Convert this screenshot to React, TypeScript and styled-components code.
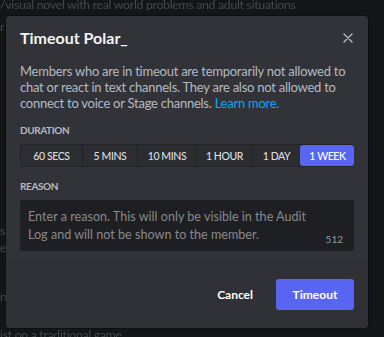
import React from "react";
import styled, { createGlobalStyle } from "styled-components";

const Global = createGlobalStyle`
  html, body { margin: 0; padding: 0; background: #111214; }
  body { font-family: Lato, "Noto Sans", sans-serif; }
  * { box-sizing: border-box; }
`;

const Page = styled.div`
  position: relative;
  width: 384px;
  height: 337px;
  overflow: hidden;
  background: #141517;
`;

const Backdrop = styled.div`
  display: flex;
  flex-direction: column;
  height: 100%;
  color: #46484c;
  font-size: 12.3px;
  letter-spacing: -0.3px;
  line-height: 16px;
  filter: blur(0.4px);
`;

const BackLine = styled.div<{ $top: number }>`
  margin-top: ${(p) => p.$top}px;
  white-space: nowrap;
  height: 16px;
`;

const Modal = styled.div`
  position: absolute;
  left: 6px;
  top: 16px;
  width: 362px;
  height: 312px;
  border-radius: 4px;
  background: #313338;
  display: flex;
  flex-direction: column;
  overflow: hidden;
  box-shadow: 0 0 0 1px rgba(0, 0, 0, 0.25);
`;

const Body = styled.div`
  padding: 12px 14px 0 14px;
  display: flex;
  flex-direction: column;
`;

const Header = styled.div`
  display: flex;
  align-items: center;
  justify-content: space-between;
  height: 20px;
`;

const Title = styled.h1`
  margin: 0;
  font-size: 16px;
  line-height: 20px;
  font-weight: 700;
  color: #f2f3f5;
`;

const Close = styled.button`
  border: none;
  background: none;
  padding: 0;
  width: 12px;
  height: 12px;
  display: flex;
  align-items: center;
  justify-content: center;
  color: #b5bac1;
`;

const Description = styled.p`
  margin: 15px 0 0 0;
  font-size: 13px;
  letter-spacing: -0.25px;
  line-height: 16px;
  color: #b5bac1;
`;

const Link = styled.a`
  color: #00a8fc;
  text-decoration: none;
`;

const Label = styled.div<{ $gap: number }>`
  margin-top: ${(p) => p.$gap}px;
  font-size: 10px;
  letter-spacing: -0.4px;
  line-height: 13px;
  font-weight: 700;
  color: #b5bac1;
  text-transform: uppercase;
`;

const Segments = styled.div`
  margin-top: 7px;
  display: flex;
  height: 23px;
  background: #2b2d31;
  border-radius: 3px;
  border: 1px solid #232428;
`;

const Segment = styled.div<{ $active?: boolean; $w: number }>`
  width: ${(p) => p.$w}px;
  flex: none;
  display: flex;
  align-items: center;
  justify-content: center;
  font-size: 10.5px;
  font-weight: 500;
  letter-spacing: -0.4px;
  color: ${(p) => (p.$active ? "#ffffff" : "#dbdee1")};
  background: ${(p) => (p.$active ? "#5865f2" : "transparent")};
  border-left: 1px solid ${(p) => (p.$active ? "transparent" : "#232428")};
  border-radius: ${(p) => (p.$active ? "3px" : "0")};
  &:first-child { border-left: none; }
`;

const TextArea = styled.div`
  margin-top: 7px;
  height: 51px;
  background: #1e1f22;
  border-radius: 3px;
  position: relative;
  padding: 8px 8px 0 8px;
`;

const Placeholder = styled.div`
  font-size: 12.6px;
  line-height: 17.5px;
  color: #87898c;
  white-space: nowrap;
`;

const Counter = styled.span`
  position: absolute;
  right: 11px;
  bottom: 6px;
  font-size: 10px;
  color: #949ba4;
`;

const Footer = styled.div`
  margin-top: auto;
  height: 68px;
  background: #2f3136;
  display: flex;
  align-items: center;
  justify-content: flex-end;
  gap: 13px;
  padding: 0 14px 0 0;
`;

const Button = styled.button<{ $primary?: boolean }>`
  height: 31px;
  padding: 0 ${(p) => (p.$primary ? "14px" : "10px")};
  min-width: ${(p) => (p.$primary ? "78px" : "0")};
  border: none;
  border-radius: 3px;
  font-family: inherit;
  font-size: 12px;
  font-weight: 700;
  color: #ffffff;
  background: ${(p) => (p.$primary ? "#5865f2" : "transparent")};
`;

const durations: { label: string; w: number }[] = [
  { label: "60 SECS", w: 61 },
  { label: "5 MINS", w: 55 },
  { label: "10 MINS", w: 59 },
  { label: "1 HOUR", w: 56 },
  { label: "1 DAY", w: 48 },
  { label: "1 WEEK", w: 54 },
];

export default function App() {
  return (
    <>
      <Global />
      <Page>
        <Backdrop>
          <BackLine $top={-3}>/visual novel with real world problems and adult situations</BackLine>
          <BackLine $top={6}>r</BackLine>
          <BackLine $top={188}>s</BackLine>
          <BackLine $top={1}>e</BackLine>
          <BackLine $top={33}>n</BackLine>
          <BackLine $top={22}>ist on a traditional game</BackLine>
        </Backdrop>
        <Modal>
          <Body>
            <Header>
              <Title>Timeout Polar_</Title>
              <Close aria-label="Close">
                <svg width="10" height="10" viewBox="0 0 10 10">
                  <path d="M1 1 L9 9 M9 1 L1 9" stroke="currentColor" strokeWidth="1.4" strokeLinecap="round" />
                </svg>
              </Close>
            </Header>
            <Description>
              Members who are in timeout are temporarily not allowed to chat or react in text channels. They are also not allowed to connect to voice or Stage channels. <Link>Learn more.</Link>
            </Description>
            <Label $gap={13}>Duration</Label>
            <Segments>
              {durations.map((d) => (
                <Segment key={d.label} $w={d.w} $active={d.label === "1 WEEK"}>
                  {d.label}
                </Segment>
              ))}
            </Segments>
            <Label $gap={13}>Reason</Label>
            <TextArea>
              <Placeholder>
                Enter a reason. This will only be visible in the Audit
                <br />
                Log and will not be shown to the member.
              </Placeholder>
              <Counter>512</Counter>
            </TextArea>
          </Body>
          <Footer>
            <Button>Cancel</Button>
            <Button $primary>Timeout</Button>
          </Footer>
        </Modal>
      </Page>
    </>
  );
}
